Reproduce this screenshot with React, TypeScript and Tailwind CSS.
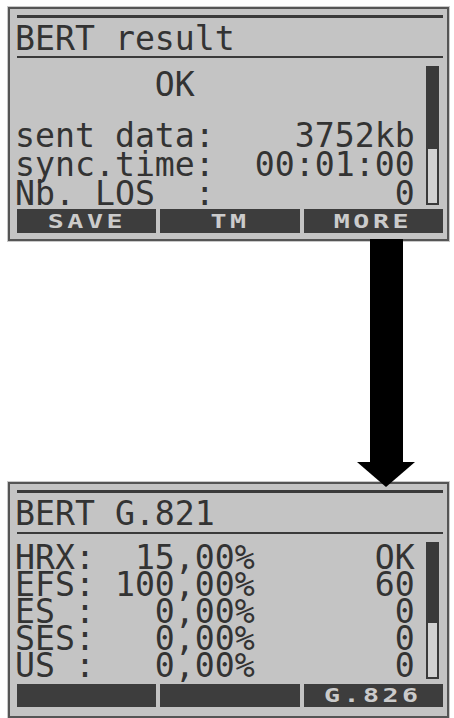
import type { ReactNode } from 'react'

const LCD_FONT = { fontFamily: '"DejaVu Sans Mono", "Liberation Mono", monospace' }

function SoftKey({ label }: { label?: string }) {
  return (
    <div className="h-full bg-[#3d3d3d] flex items-center justify-center overflow-hidden">
      {label && (
        <span
          className="text-[19px] leading-none font-bold tracking-[2.5px] text-[#cbcbcb] scale-x-[1.4] inline-block"
          style={LCD_FONT}
        >
          {label}
        </span>
      )}
    </div>
  )
}

function ScrollBar({ height, filled }: { height: number; filled: number }) {
  return (
    <div className="w-[13px] flex flex-col" style={{ height }}>
      <div className="bg-[#3a3a3a]" style={{ height: filled }} />
      <div className="flex-1 border-2 border-[#3a3a3a] bg-[#d2d2d2]" />
    </div>
  )
}

function Panel({
  title,
  children,
  keys,
  titleHeight,
  contentTop,
  barTop,
  barHeight,
  barFilled,
  keysGap,
  keysHeight,
  bottomPad,
}: {
  title: string
  children: ReactNode
  keys: (string | undefined)[]
  titleHeight: string
  contentTop: string
  barTop: string
  barHeight: number
  barFilled: number
  keysGap: string
  keysHeight: string
  bottomPad: string
}) {
  return (
    <div
      className={`ml-[8px] w-[441px] border-2 border-[#555] bg-[#c4c4c4] pl-[7px] pr-[4px] pt-[6px] shadow-[0_0_0_1px_#c9c9c9] ${bottomPad}`}
    >
      <div className="h-[3px] bg-[#3a3a3a]" />
      <div
        className={`${titleHeight} mt-[3px] -ml-[2px] flex items-center text-[33.2px] leading-[38px] text-[#333] whitespace-pre`}
        style={LCD_FONT}
      >
        {title}
      </div>
      <div className="h-[2px] bg-[#3a3a3a]" />
      <div className="flex">
        <div
          className={`w-[411px] -ml-[2px] ${contentTop} text-[33.2px] text-[#333] whitespace-pre`}
          style={LCD_FONT}
        >
          {children}
        </div>
        <div className={barTop}>
          <ScrollBar height={barHeight} filled={barFilled} />
        </div>
      </div>
      <div className={`grid grid-cols-3 gap-[4px] ${keysGap} ${keysHeight}`}>
        {keys.map((k, i) => (
          <SoftKey key={i} label={k} />
        ))}
      </div>
    </div>
  )
}

export default function App() {
  return (
    <div className="w-[454px] h-[718px] bg-white pt-[7px] overflow-hidden">
      {/* first screen */}
      <Panel
        title="BERT result"
        keys={['SAVE', 'TM', 'MORE']}
        titleHeight="h-[35px]"
        contentTop="pt-[12px]"
        barTop="pt-[8px]"
        barHeight={139}
        barFilled={81}
        keysGap="mt-[1px]"
        keysHeight="h-[24px]"
        bottomPad="pb-[6px]"
      >
        <div className="leading-[29px]">{'       OK'}</div>
        <div className="leading-[29px] mt-[22px]">{'sent data:    3752kb'}</div>
        <div className="leading-[29px]">{'sync.time:  00:01:00'}</div>
        <div className="leading-[29px]">{'Nb. LOS  :         0'}</div>
      </Panel>

      {/* arrow */}
      <div className="h-[241px] relative z-10">
        <svg
          width="58"
          height="241"
          viewBox="0 0 58 241"
          className="ml-[357px] block overflow-visible"
        >
          <rect x="13" y="-2" width="33" height="224" fill="#000" />
          <polygon points="0,221 58,221 29,246" fill="#000" />
        </svg>
      </div>

      {/* second screen */}
      <Panel
        title="BERT G.821"
        keys={[undefined, undefined, 'G.826']}
        titleHeight="h-[36px]"
        contentTop="pt-[10px]"
        barTop="pt-[8px]"
        barHeight={137}
        barFilled={79}
        keysGap="mt-[5px]"
        keysHeight="h-[23px]"
        bottomPad="pb-[9px]"
      >
        <div className="leading-[27px]">{'HRX:  15,00%      OK'}</div>
        <div className="leading-[27px]">{'EFS: 100,00%      60'}</div>
        <div className="leading-[27px]">{'ES :   0,00%       0'}</div>
        <div className="leading-[27px]">{'SES:   0,00%       0'}</div>
        <div className="leading-[27px]">{'US :   0,00%       0'}</div>
      </Panel>
    </div>
  )
}
